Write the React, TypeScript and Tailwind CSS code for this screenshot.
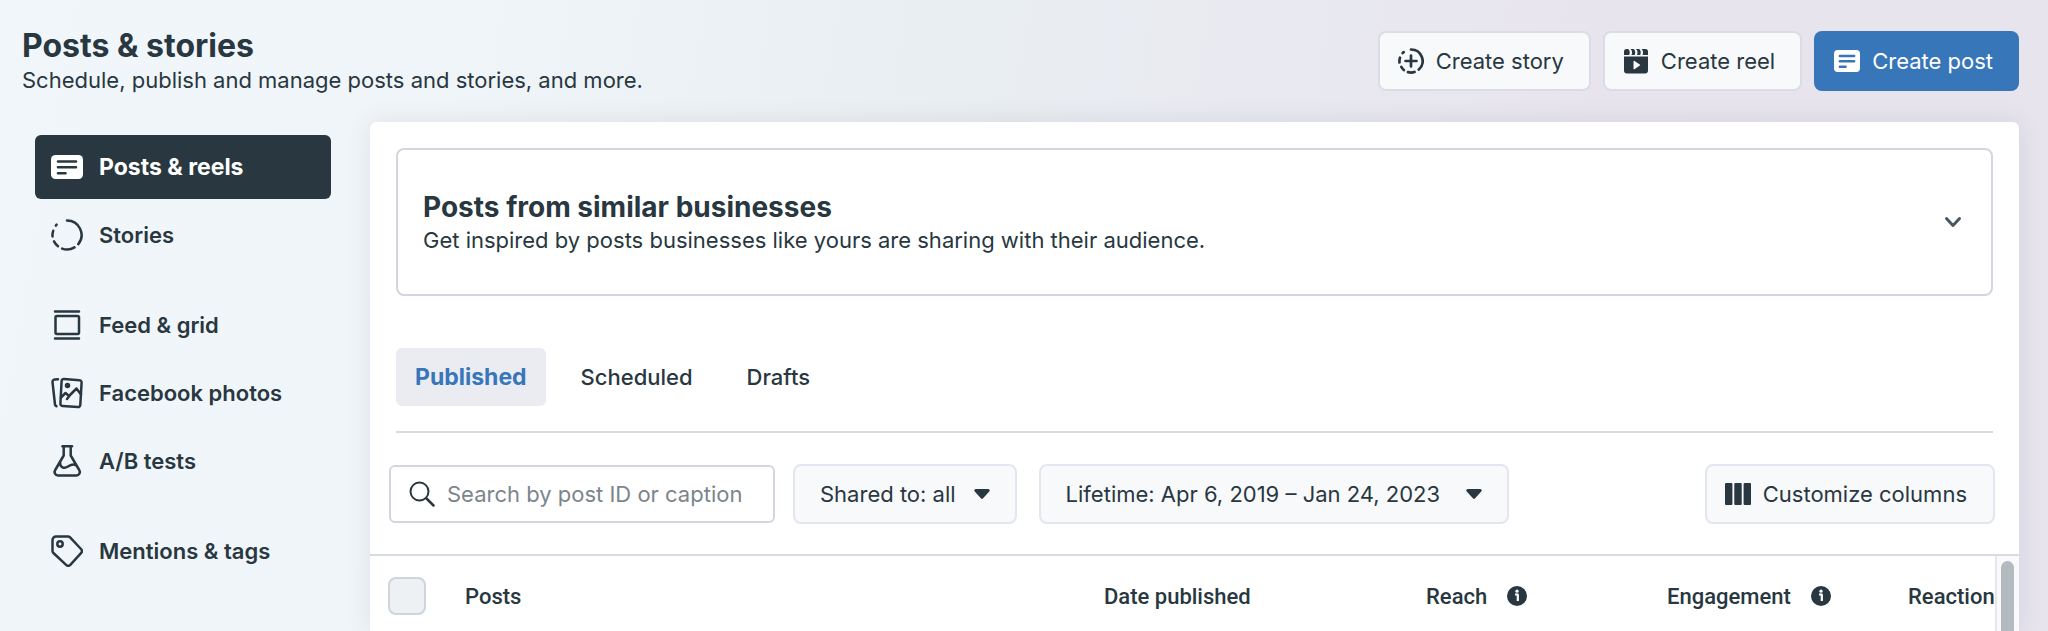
import { useState } from "react";
import type { ReactNode } from "react";

const stroke = {
  fill: "none",
  stroke: "currentColor",
  strokeWidth: 2.5,
  strokeLinecap: "round",
  strokeLinejoin: "round",
} as const;

function PostIcon({ className }: { className: string }) {
  return (
    <svg viewBox="0 0 32 24" preserveAspectRatio="none" className={className} aria-hidden="true">
      <rect width="32" height="24" rx="4.500" fill="currentColor" />
      <path
        d="M7 6.500h18M7 12.300h18M7 18.200h7.500"
        className="stroke-[#283740] group-data-[primary]:stroke-[#3876ba]"
        strokeWidth="2.600"
        strokeLinecap="round"
      />
    </svg>
  );
}

function StoryIcon() {
  return (
    <svg viewBox="0 0 32 32" className="size-8" aria-hidden="true" {...stroke}>
      <path d="M16 1.500a14.500 14.500 0 0 1 11.300 23.600" />
      <path d="M23.500 28.400a14.500 14.500 0 0 1-12.400 1.200" />
      <path d="M7 27.300a14.500 14.500 0 0 1-4-4.900" />
      <path d="M1.500 17.500a14.500 14.500 0 0 1 .7-5.700" />
      <path d="M4.800 6.600l.8-.9" />
    </svg>
  );
}

function FeedIcon() {
  return (
    <svg viewBox="0 0 32 32" className="size-8" aria-hidden="true" {...stroke}>
      <path d="M4 2.500h24M4 29.500h24" />
      <rect x="4.500" y="7" width="23.500" height="18" rx="1.500" />
    </svg>
  );
}

function PhotosIcon() {
  return (
    <svg viewBox="0 0 32 32" className="size-8" aria-hidden="true" {...stroke}>
      <path d="M7 2.200l-3.500.4a2.200 2.200 0 0 0-2 2.500L4 27.500a2 2 0 0 0 1.500 1.700" />
      <path d="M13 2l15.500 1.200a2.200 2.200 0 0 1 2.100 2.400L29.300 28a2.200 2.200 0 0 1-2.400 2.100l-15.500-1.200a2.200 2.200 0 0 1-2-2.400L10.600 4A2.200 2.200 0 0 1 13 2z" />
      <path d="M10 20.500l4.500-4.500 3 2.500M16 22l3.500-4.500 6-6 4.500 6" />
      <circle cx="16.500" cy="8.500" r="1.500" fill="currentColor" />
    </svg>
  );
}

function FlaskIcon() {
  return (
    <svg viewBox="0 0 32 32" className="size-8" aria-hidden="true" {...stroke}>
      <path d="M11.500 1.300h9.500" />
      <path d="M12.700 1.300V10.500L4.200 25a3.500 3.500 0 0 0 3 5.500h18a3.500 3.500 0 0 0 3-5.500L19.700 10.500V1.300" />
      <path d="M9 17.500c0 5 4 6.500 8 4 3-1.900 5-2.500 7.500-1.500" />
    </svg>
  );
}

function TagIcon() {
  return (
    <svg viewBox="0 0 32 32" className="size-8" aria-hidden="true" {...stroke}>
      <path d="M5 1.500h12a3 3 0 0 1 2.100.9L30 14a3 3 0 0 1 0 4.200L19.300 29.800a3 3 0 0 1-4.200 0L2.400 18A3 3 0 0 1 1.500 15.800V5A3.500 3.500 0 0 1 5 1.500z" />
      <circle cx="9" cy="9" r="2.700" />
    </svg>
  );
}

function CreateStoryIcon() {
  return (
    <svg viewBox="0 0 26 26" className="size-[26px]" aria-hidden="true" {...stroke} strokeWidth={2.7}>
      <path d="M13 1.500a11.500 11.500 0 0 1 7.800 20" />
      <path d="M16.500 24a11.500 11.500 0 0 1-6.500.1M5.800 22a11.500 11.500 0 0 1-2.500-3.100M1.500 14.500a11.500 11.500 0 0 1 .5-4.800M4.700 5l1-.9" />
      <path d="M13 7.500v11M7.500 13h11" />
    </svg>
  );
}

function ReelIcon() {
  return (
    <svg viewBox="0 0 26 26" className="size-[26px]" aria-hidden="true" fill="currentColor">
      <path d="M3.500 1h1.700q2.500 2.500 1 6H1V3.500A2.500 2.500 0 0 1 3.500 1zM7.500 1h3.200q2.500 2.500 1 6H8.500q1.500-3.500-1-6zM13 1h3.200q2.500 2.500 1 6H14q1.500-3.500-1-6zM18.500 1h4A2.500 2.500 0 0 1 25 3.500V7h-5.500q1.500-3.500-1-6z" />
      <path
        fillRule="evenodd"
        d="M1 8.500h24v14a3 3 0 0 1-3 3H4a3 3 0 0 1-3-3zM10.500 13.500v7.200a.6.6 0 0 0 1 .5l5.300-3.600a.6.6 0 0 0 0-1l-5.300-3.600a.6.6 0 0 0-1 .5z"
      />
    </svg>
  );
}

function ColumnsIcon() {
  return (
    <svg viewBox="0 0 26 22" className="h-[22px] w-[26px]" aria-hidden="true" fill="currentColor">
      <rect width="7.400" height="22" rx="1" />
      <rect x="9.300" width="7.400" height="22" rx="1" />
      <rect x="18.600" width="7.400" height="22" rx="1" />
    </svg>
  );
}

function CaretIcon() {
  return (
    <svg viewBox="0 0 16 10" className="h-[10px] w-4" aria-hidden="true" fill="currentColor">
      <path d="M1.800 0h12.400a1.500 1.500 0 0 1 1.100 2.500L9.100 9.300a1.500 1.500 0 0 1-2.200 0L.7 2.500A1.500 1.500 0 0 1 1.800 0z" />
    </svg>
  );
}

function InfoIcon() {
  return (
    <svg viewBox="0 0 20 20" className="size-5" aria-hidden="true">
      <circle cx="10" cy="10" r="10" fill="currentColor" />
      <circle cx="10" cy="5.200" r="1.600" fill="#fff" />
      <path d="M8 8.500h2.800V15" fill="none" stroke="#fff" strokeWidth="2.200" strokeLinejoin="round" />
    </svg>
  );
}

interface NavItem {
  label: string;
  icon: ReactNode;
}

const navGroups: NavItem[][] = [
  [
    { label: "Posts & reels", icon: <PostIcon className="h-6 w-8" /> },
    { label: "Stories", icon: <StoryIcon /> },
  ],
  [
    { label: "Feed & grid", icon: <FeedIcon /> },
    { label: "Facebook photos", icon: <PhotosIcon /> },
    { label: "A/B tests", icon: <FlaskIcon /> },
  ],
  [{ label: "Mentions & tags", icon: <TagIcon /> }],
];

const tabs = ["Published", "Scheduled", "Drafts"];

function Sidebar() {
  return (
    <nav className="flex w-[296px] shrink-0 flex-col gap-[26px] pt-[13px]">
      {navGroups.map((group, index) => (
        <ul key={index} className="flex flex-col gap-1">
          {group.map((item) => {
            const active = item.label === "Posts & reels";
            return (
              <li key={item.label}>
                <a
                  href="#"
                  aria-current={active ? "page" : undefined}
                  className={`flex h-16 items-center gap-4 rounded-md px-4 ${
                    active
                      ? "bg-[#283740] text-[23px] font-bold text-white"
                      : "text-[22px] font-semibold"
                  }`}
                >
                  {item.icon}
                  {item.label}
                </a>
              </li>
            );
          })}
        </ul>
      ))}
    </nav>
  );
}

function Header() {
  return (
    <header className="flex items-start justify-between pr-[29px] pl-[22px]">
      <div className="pt-[26px]">
        <h1 className="text-[32px] leading-10 font-bold">Posts &amp; stories</h1>
        <p className="text-[22px] leading-7">
          Schedule, publish and manage posts and stories, and more.
        </p>
      </div>
      <div className="flex gap-3 pt-[31px] text-[22px]">
        <button className="flex h-[60px] items-center gap-3 rounded-lg border-2 border-[#dcdce6] bg-[#f8f9fb] pr-[25px] pl-[18px]">
          <CreateStoryIcon />
          Create story
        </button>
        <button className="flex h-[60px] items-center gap-3 rounded-lg border-2 border-[#dcdce6] bg-[#f8f9fb] pr-[25px] pl-[18px]">
          <ReelIcon />
          Create reel
        </button>
        <button
          data-primary
          className="group flex h-[60px] items-center gap-3 rounded-lg bg-[#3876ba] pr-[26px] pl-5 text-white"
        >
          <PostIcon className="h-[22px] w-[26px]" />
          Create post
        </button>
      </div>
    </header>
  );
}

function Filters() {
  return (
    <div className="flex items-center pt-[31px] pr-6 pb-[30px] pl-[19px] text-[22px]">
      <label className="flex h-[58px] w-[386px] items-center gap-3 rounded-md border-2 border-[#d3d6de] px-[18px]">
        <svg viewBox="0 0 26 26" className="size-[26px] shrink-0" aria-hidden="true" {...stroke} strokeWidth={2}>
          <circle cx="10.500" cy="10.500" r="9" />
          <path d="M17.500 17.500l7 7" strokeWidth={2.5} />
        </svg>
        <input
          type="text"
          aria-label="Search posts"
          placeholder="Search by post ID or caption"
          className="w-full min-w-0 outline-none placeholder:text-[#7c858c]"
        />
      </label>
      <button className="ml-[18px] flex h-[60px] items-center gap-[18px] rounded-lg border-2 border-[#e3e6ee] bg-[#f8f9fb] px-[25px]">
        Shared to: all
        <CaretIcon />
      </button>
      <button className="ml-[22px] flex h-[60px] items-center gap-[26px] rounded-lg border-2 border-[#e3e6ee] bg-[#f8f9fb] px-[25px]">
        Lifetime: Apr 6, 2019 – Jan 24, 2023
        <CaretIcon />
      </button>
      <button className="ml-auto flex h-[60px] items-center gap-3 rounded-lg border-2 border-[#e3e6ee] bg-[#f8f9fb] pr-[26px] pl-[18px]">
        <ColumnsIcon />
        Customize columns
      </button>
    </div>
  );
}

function PostsTable() {
  return (
    <div className="flex border-t-2 border-[#d9dbe2]">
      <div className="min-w-0 flex-1 overflow-hidden">
        <table className="w-full table-fixed text-left font-[Roboto,'Liberation_Sans',sans-serif] text-[22px] whitespace-nowrap">
          <thead>
            <tr className="h-20">
              <th className="w-[95px] pl-[18px]">
                <input
                  type="checkbox"
                  aria-label="Select all posts"
                  className="block size-[38px] appearance-none rounded-lg border-2 border-[#d0d4db] bg-[#eef1f4]"
                />
              </th>
              <th className="font-medium">Posts</th>
              <th className="w-[322px] font-medium">Date published</th>
              <th className="w-[241px] font-medium">
                <span className="flex items-center gap-5">
                  Reach <InfoIcon />
                </span>
              </th>
              <th className="w-[241px] font-medium">
                <span className="flex items-center gap-5">
                  Engagement <InfoIcon />
                </span>
              </th>
              <th className="w-[87px] font-medium">Reaction</th>
            </tr>
          </thead>
        </table>
      </div>
      {/* Scrollbar */}
      <div className="w-6 border-l-2 border-[#e6e7ee] bg-[#fafafc] pt-[5px] pl-[4px]">
        <div className="h-full w-[13px] rounded-t-full bg-[#b4bbc0]"></div>
      </div>
    </div>
  );
}

function App() {
  const [activeTab, setActiveTab] = useState("Published");

  return (
    <div className="flex h-screen flex-col overflow-hidden bg-[linear-gradient(100deg,#f1f6fa_0%,#f0f5f9_20%,#e9eef2_45%,#e8e4ee_75%,#e7e4ee_100%)] font-[Inter,'Liberation_Sans',sans-serif] text-[#283740]">
      <Header />
      <div className="flex min-h-0 flex-1 gap-[39px] pt-[28px] pr-[29px] pl-[35px]">
        <Sidebar />
        <main className="flex min-w-0 flex-1 flex-col rounded-t-md bg-white shadow-[0_0_24px_rgba(40,55,64,0.1)]">
          <section className="mx-[26px] mt-[26px] flex h-[148px] shrink-0 items-center justify-between rounded-lg border-2 border-[#d3d6de] pr-[28px] pl-[25px]">
            <div>
              <h2 className="text-[28px] leading-9 font-bold">Posts from similar businesses</h2>
              <p className="text-[22px] leading-[30px]">
                Get inspired by posts businesses like yours are sharing with their audience.
              </p>
            </div>
            <button aria-label="Expand" className="text-[#4b575f]">
              <svg viewBox="0 0 20 20" className="size-5" {...stroke} strokeWidth={3}>
                <path d="M3.500 6.500l6.500 7 6.500-7" />
              </svg>
            </button>
          </section>

          <div
            role="tablist"
            className="mx-[26px] mt-[52px] flex gap-4 border-b-2 border-[#d9dbe2] pb-[25px] text-[22px]"
          >
            {tabs.map((tab) => (
              <button
                key={tab}
                role="tab"
                aria-selected={tab === activeTab}
                onClick={() => setActiveTab(tab)}
                className={`h-[58px] rounded-md px-[19px] ${
                  tab === activeTab
                    ? "bg-[#ebecf1] text-[23px] font-bold text-[#3876ba]"
                    : "font-medium"
                }`}
              >
                {tab}
              </button>
            ))}
          </div>

          <Filters />
          <PostsTable />
        </main>
      </div>
    </div>
  );
}

export default App;
